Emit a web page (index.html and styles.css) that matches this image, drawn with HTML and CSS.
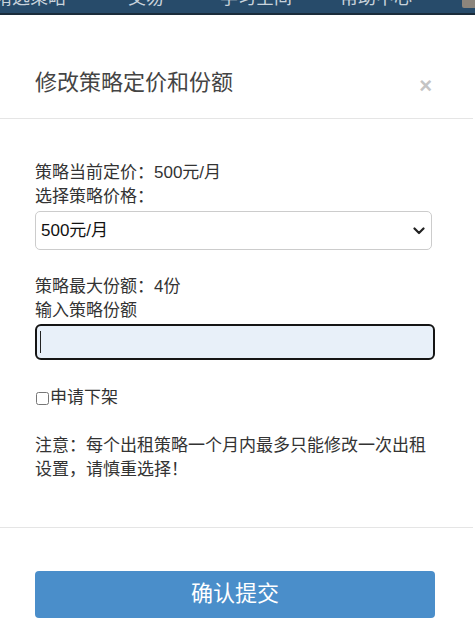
FILE: index.html
```html
<!DOCTYPE html>
<html lang="zh-CN">
<head>
<meta charset="utf-8">
<title>修改策略定价和份额</title>
<link rel="stylesheet" href="styles.css">
</head>
<body>
<nav class="topnav">
  <span class="nav-item nav-item-1">精选策略</span>
  <span class="nav-item nav-item-2">交易</span>
  <span class="nav-item nav-item-3">学习空间</span>
  <span class="nav-item nav-item-4">帮助中心</span>
  <span class="nav-avatar"></span>
</nav>
<div class="modal">
  <div class="modal-header">
    <h4 class="modal-title">修改策略定价和份额</h4>
    <button class="close" type="button">×</button>
  </div>
  <div class="modal-body">
    <div class="line">策略当前定价：500元/月</div>
    <label class="line">选择策略价格：</label>
    <div class="select-wrap">
      <select class="select"><option>500元/月</option></select>
      <svg class="chev" width="12" height="8" viewBox="0 0 12 8"><path d="M1.5 1.5 L6 6 L10.5 1.5" fill="none" stroke="#222" stroke-width="2.2" stroke-linecap="round" stroke-linejoin="round"/></svg>
    </div>
    <div class="group">
      <div class="line">策略最大份额：4份</div>
      <label class="line">输入策略份额</label>
      <div class="input-box"><span class="caret"></span></div>
    </div>
    <label class="check-line"><input type="checkbox" class="check">申请下架</label>
    <p class="note">注意：每个出租策略一个月内最多只能修改一次出租设置，请慎重选择！</p>
  </div>
  <div class="modal-footer">
    <button class="btn" type="button">确认提交</button>
  </div>
</div>
</body>
</html>
```
FILE: styles.css
```css
html, body {
  margin: 0;
  padding: 0;
  background: #ffffff;
}
body {
  font-family: "Liberation Sans", "Noto Sans CJK SC", sans-serif;
  color: #333333;
  overflow: hidden;
}
.topnav {
  height: 13px;
  background: #274b6a;
  border-bottom: 2px solid #1a2c3b;
  display: flex;
  align-items: flex-end;
  overflow: hidden;
  position: relative;
}
.nav-item {
  font-size: 18px;
  line-height: 18px;
  color: #c9d3dc;
  margin-bottom: 6px;
  flex: none;
}
.nav-item-1 { margin-left: -6px; width: 134px; }
.nav-item-2 { width: 92px; }
.nav-item-3 { width: 120px; }
.nav-item-4 { width: 110px; }
.nav-avatar {
  align-self: flex-start;
  margin-left: auto;
  width: 13px;
  height: 8px;
  background: #8c857c;
  border-bottom-left-radius: 2px;
}
.modal {
  background: #ffffff;
  border-top-right-radius: 6px;
  margin-right: 2px;
}
.modal-header {
  display: flex;
  align-items: center;
  justify-content: space-between;
  padding: 53px 41px 20px 35px;
  border-bottom: 1px solid #e5e5e5;
}
.modal-title {
  margin: 0;
  font-size: 22px;
  line-height: 30px;
  font-weight: normal;
  color: #444444;
}
.close {
  border: 0;
  background: none;
  padding: 0;
  margin-top: 5px;
  font-family: "Liberation Sans", sans-serif;
  font-size: 22px;
  font-weight: bold;
  line-height: 22px;
  color: #c4c4c4;
}
.modal-body {
  padding: 42px 38px 45px 35px;
  font-size: 17px;
  line-height: 24px;
}
.line {
  display: block;
}
.select-wrap {
  position: relative;
  margin-top: 2px;
  width: 397px;
}
.select {
  appearance: none;
  -webkit-appearance: none;
  display: block;
  width: 100%;
  height: 39px;
  box-sizing: border-box;
  border: 1px solid #cccccc;
  border-radius: 5px;
  background: #ffffff;
  padding: 0 5px;
  font-family: "Liberation Sans", "Noto Sans CJK SC", sans-serif;
  font-size: 17px;
  color: #111111;
}
.chev {
  position: absolute;
  right: 7px;
  top: 16px;
}
.group {
  margin-top: 25px;
}
.input-box {
  margin-top: 1px;
  height: 36px;
  box-sizing: border-box;
  border: 2px solid #151515;
  border-radius: 6px;
  background: #e8f0f9;
  display: flex;
  align-items: center;
  padding-left: 3px;
}
.caret {
  width: 1px;
  height: 22px;
  background: #222222;
}
.check-line {
  display: flex;
  align-items: center;
  margin-top: 26px;
  color: #333333;
}
.check {
  width: 13px;
  height: 13px;
  margin: 0 1px 0 1px;
}
.note {
  margin: 24px 0 0 0;
  max-width: 400px;
}
.modal-footer {
  border-top: 1px solid #e5e5e5;
  padding: 43px 38px 20px 35px;
}
.btn {
  display: block;
  width: 100%;
  height: 47px;
  border: 0;
  border-radius: 4px;
  background: #4a8eca;
  color: #ffffff;
  font-family: "Liberation Sans", "Noto Sans CJK SC", sans-serif;
  font-size: 22px;
  line-height: 30px;
  padding: 0 0 2px 0;
}
```
